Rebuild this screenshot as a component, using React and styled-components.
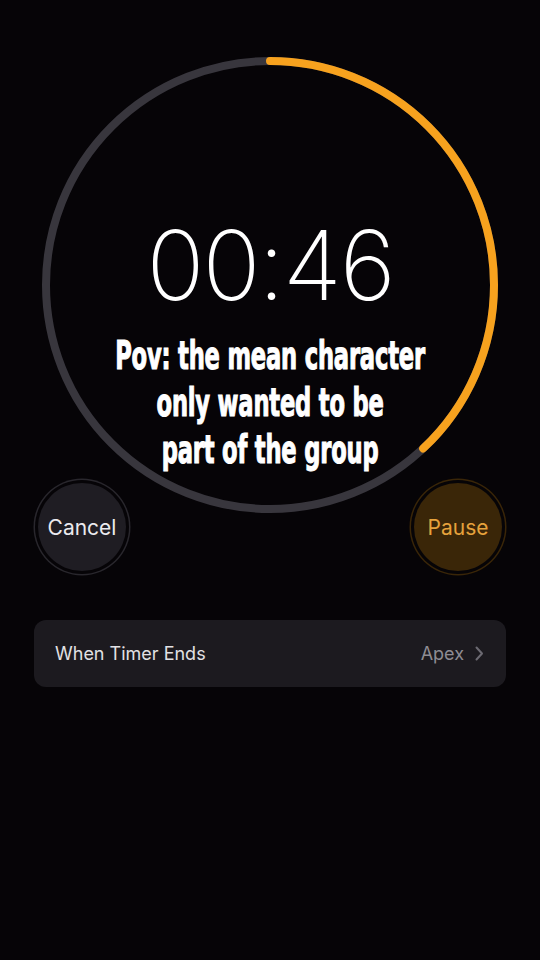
import React from "react";
import styled, { createGlobalStyle } from "styled-components";

const Global = createGlobalStyle`
  html, body { margin: 0; padding: 0; background: #060407; }
  #root { width: 540px; min-height: 960px; }
`;

const Screen = styled.div`
  width: 540px;
  height: 960px;
  background: #060407;
  overflow: hidden;
  display: flex;
  flex-direction: column;
  font-family: Inter, "Liberation Sans", sans-serif;
`;

const RingBox = styled.div`
  position: relative;
  width: 456px;
  height: 456px;
  margin: 57px auto 0;
  display: flex;
  flex-direction: column;
  align-items: center;
`;

const RingSvg = styled.svg`
  position: absolute;
  inset: 0;
`;

const Time = styled.div`
  position: relative;
  margin-top: 160px;
  font-family: Inter, "Liberation Sans", sans-serif;
  font-weight: 200;
  font-size: 96px;
  line-height: 1;
  letter-spacing: -2px;
  color: #ffffff;
`;

const Caption = styled.div`
  position: relative;
  margin-top: 19px;
  font-family: "DejaVu Sans Condensed", "DejaVu Sans", sans-serif;
  font-weight: 700;
  font-size: 39px;
  line-height: 47px;
  color: #ffffff;
  -webkit-text-stroke: 1.1px #ffffff;
  text-align: center;
  white-space: nowrap;
  transform: scaleX(0.645);
  letter-spacing: -0.3px;
`;

const ButtonRow = styled.div`
  display: flex;
  justify-content: space-between;
  padding: 0 38px;
  margin-top: -30px;
  position: relative;
`;

const RoundButton = styled.div`
  width: 88px;
  height: 88px;
  border-radius: 50%;
  display: flex;
  align-items: center;
  justify-content: center;
  font-size: 21px;
  background: ${(p) => p.$fill};
  color: ${(p) => p.$ink};
  box-shadow: 0 0 0 3px #060407, 0 0 0 4.5px ${(p) => p.$ring};
`;

const SettingRow = styled.div`
  margin: 49px 34px 0;
  height: 67px;
  border-radius: 12px;
  background: #1c1a1f;
  display: flex;
  align-items: center;
  padding: 0 21px;
  font-size: 18px;
`;

const Label = styled.div`
  flex: 1;
  color: #e2e1e4;
`;

const Value = styled.div`
  color: #8e8c93;
  display: flex;
  align-items: center;
  gap: 11px;
  padding-right: 1px;
`;

export default function App() {
  const r = 224;
  const c = 2 * Math.PI * r;
  const frac = 0.38;
  return (
    <>
      <Global />
      <Screen>
        <RingBox>
          <RingSvg width="456" height="456" viewBox="0 0 456 456">
            <circle cx="228" cy="228" r={r} fill="none" stroke="#38363d" strokeWidth="8" />
            <circle
              cx="228"
              cy="228"
              r={r}
              fill="none"
              stroke="#f7a21e"
              strokeWidth="8"
              strokeLinecap="round"
              strokeDasharray={`${c * frac} ${c}`}
              transform="rotate(-90 228 228)"
            />
          </RingSvg>
          <Time>00:46</Time>
          <Caption>
            Pov: the mean character
            <br />
            only wanted to be
            <br />
            part of the group
          </Caption>
        </RingBox>
        <ButtonRow>
          <RoundButton $fill="#1f1d23" $ink="#ebeaee" $ring="#29272d">Cancel</RoundButton>
          <RoundButton $fill="#3a2608" $ink="#e6a23c" $ring="#3a2608">Pause</RoundButton>
        </ButtonRow>
        <SettingRow>
          <Label>When Timer Ends</Label>
          <Value>
            Apex
            <svg width="9" height="15" viewBox="0 0 9 15">
              <polyline points="1.5,1.5 7,7.5 1.5,13.5" fill="none" stroke="#6c6a72" strokeWidth="2" strokeLinecap="round" strokeLinejoin="round" />
            </svg>
          </Value>
        </SettingRow>
      </Screen>
    </>
  );
}
